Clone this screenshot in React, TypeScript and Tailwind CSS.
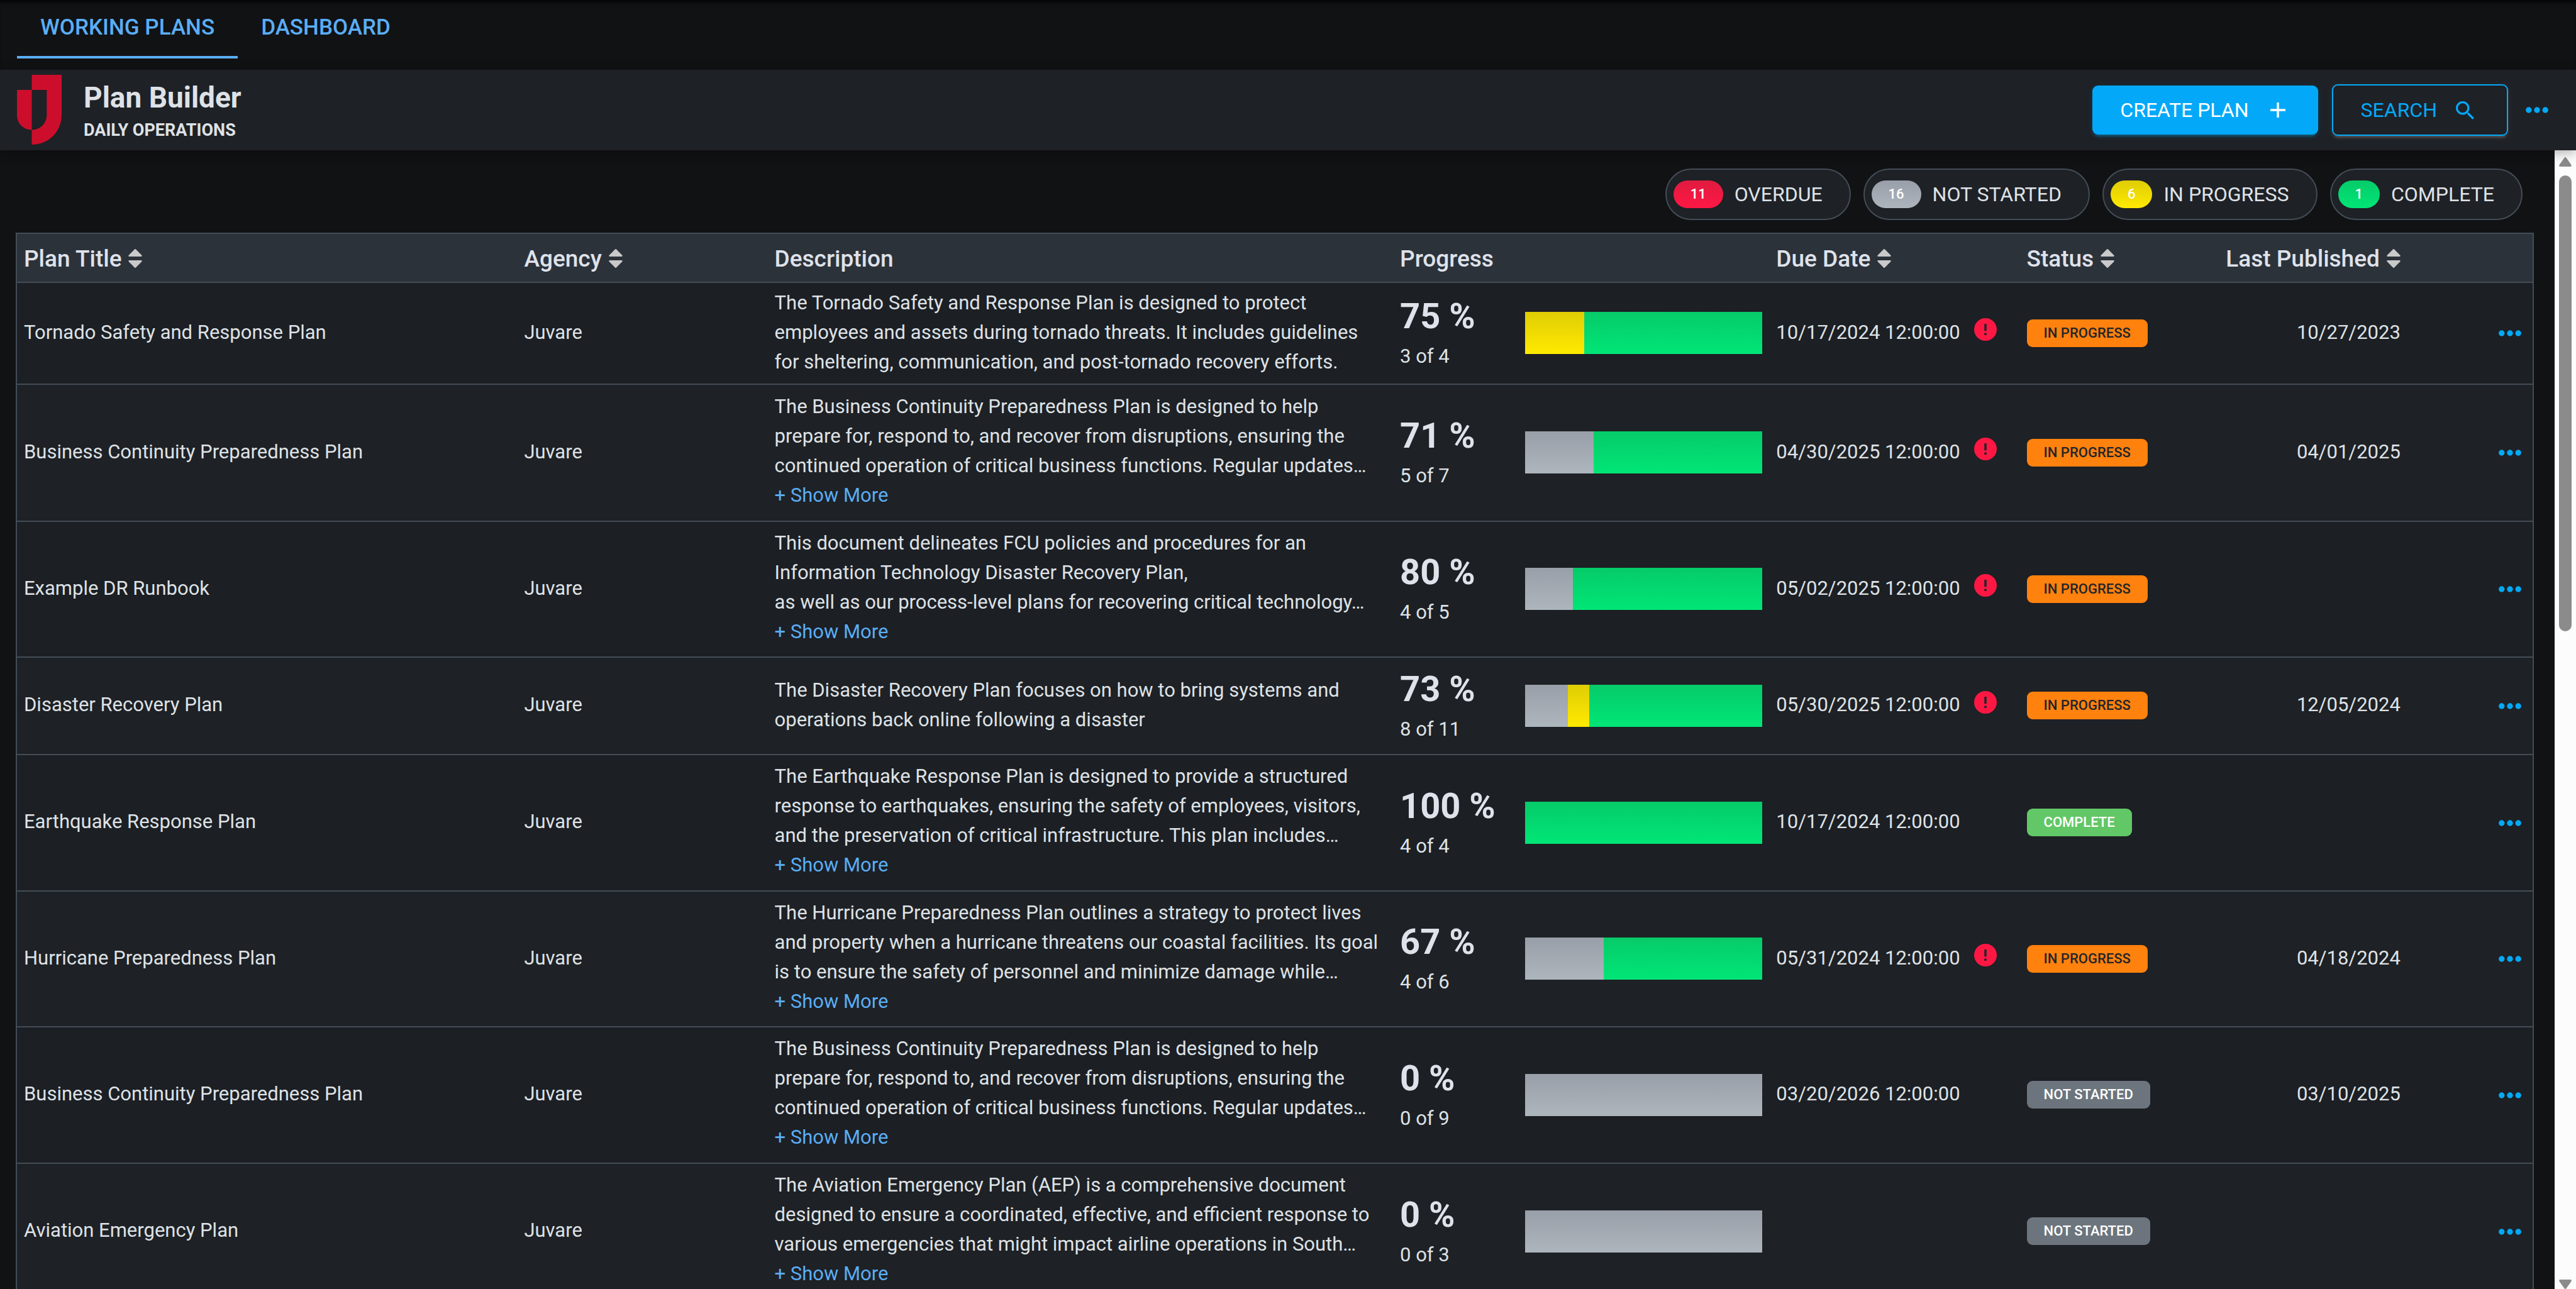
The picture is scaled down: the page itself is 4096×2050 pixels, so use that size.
import React from 'react';
import clsx from 'clsx';

type Status = 'IN PROGRESS' | 'COMPLETE' | 'NOT STARTED';

interface Segment {
  tone: 'gray' | 'yellow' | 'green';
  percent: number;
}

interface Plan {
  title: string;
  description: string;
  truncated?: boolean;
  percent: number;
  done: string;
  segments: Segment[];
  due?: string;
  overdue?: boolean;
  status: Status;
  published?: string;
  height: string;
}

const plans: Plan[] = [
  {
    title: 'Tornado Safety and Response Plan',
    description:
      'The Tornado Safety and Response Plan is designed to protect employees and assets during tornado threats. It includes guidelines for sheltering, communication, and post-tornado recovery efforts.',
    percent: 75,
    done: '3 of 4',
    segments: [{ tone: 'yellow', percent: 25 }, { tone: 'green', percent: 75 }],
    due: '10/17/2024 12:00:00',
    overdue: true,
    status: 'IN PROGRESS',
    published: '10/27/2023',
    height: 'h-[162px]',
  },
  {
    title: 'Business Continuity Preparedness Plan',
    description:
      'The Business Continuity Preparedness Plan is designed to help prepare for, respond to, and recover from disruptions, ensuring the continued operation of critical business functions. Regular updates…',
    truncated: true,
    percent: 71,
    done: '5 of 7',
    segments: [{ tone: 'gray', percent: 29 }, { tone: 'green', percent: 71 }],
    due: '04/30/2025 12:00:00',
    overdue: true,
    status: 'IN PROGRESS',
    published: '04/01/2025',
    height: 'h-[218px]',
  },
  {
    title: 'Example DR Runbook',
    description:
      'This document delineates FCU policies and procedures for an Information Technology Disaster Recovery Plan,\nas well as our process-level plans for recovering critical technology…',
    truncated: true,
    percent: 80,
    done: '4 of 5',
    segments: [{ tone: 'gray', percent: 20 }, { tone: 'green', percent: 80 }],
    due: '05/02/2025 12:00:00',
    overdue: true,
    status: 'IN PROGRESS',
    height: 'h-[216px]',
  },
  {
    title: 'Disaster Recovery Plan',
    description: 'The Disaster Recovery Plan focuses on how to bring systems and operations back online following a disaster',
    percent: 73,
    done: '8 of 11',
    segments: [
      { tone: 'gray', percent: 18 },
      { tone: 'yellow', percent: 9 },
      { tone: 'green', percent: 73 },
    ],
    due: '05/30/2025 12:00:00',
    overdue: true,
    status: 'IN PROGRESS',
    published: '12/05/2024',
    height: 'h-[155px]',
  },
  {
    title: 'Earthquake Response Plan',
    description:
      'The Earthquake Response Plan is designed to provide a structured response to earthquakes, ensuring the safety of employees, visitors, and the preservation of critical infrastructure. This plan includes…',
    truncated: true,
    percent: 100,
    done: '4 of 4',
    segments: [{ tone: 'green', percent: 100 }],
    due: '10/17/2024 12:00:00',
    status: 'COMPLETE',
    height: 'h-[217px]',
  },
  {
    title: 'Hurricane Preparedness Plan',
    description:
      'The Hurricane Preparedness Plan outlines a strategy to protect lives and property when a hurricane threatens our coastal facilities. Its goal is to ensure the safety of personnel and minimize damage while…',
    truncated: true,
    percent: 67,
    done: '4 of 6',
    segments: [{ tone: 'gray', percent: 33 }, { tone: 'green', percent: 67 }],
    due: '05/31/2024 12:00:00',
    overdue: true,
    status: 'IN PROGRESS',
    published: '04/18/2024',
    height: 'h-[216px]',
  },
  {
    title: 'Business Continuity Preparedness Plan',
    description:
      'The Business Continuity Preparedness Plan is designed to help prepare for, respond to, and recover from disruptions, ensuring the continued operation of critical business functions. Regular updates…',
    truncated: true,
    percent: 0,
    done: '0 of 9',
    segments: [{ tone: 'gray', percent: 100 }],
    due: '03/20/2026 12:00:00',
    status: 'NOT STARTED',
    published: '03/10/2025',
    height: 'h-[217px]',
  },
  {
    title: 'Aviation Emergency Plan',
    description:
      'The Aviation Emergency Plan (AEP) is a comprehensive document designed to ensure a coordinated, effective, and efficient response to various emergencies that might impact airline operations in South…',
    truncated: true,
    percent: 0,
    done: '0 of 3',
    segments: [{ tone: 'gray', percent: 100 }],
    status: 'NOT STARTED',
    height: 'h-[217px]',
  },
];

const tones = {
  red: 'bg-gradient-to-b from-[#e01b40] to-[#ff1744]',
  gray: 'bg-gradient-to-b from-[#999fa8] to-[#adb5bd]',
  yellow: 'bg-gradient-to-b from-[#dfcd05] to-[#ffea00]',
  green: 'bg-gradient-to-b from-[#06cb69] to-[#00e676]',
};

const statusStyles: Record<Status, string> = {
  'IN PROGRESS': 'bg-[#ff810e] text-[#212529]',
  COMPLETE: 'bg-[#62c766] text-white',
  'NOT STARTED': 'bg-[#6c757d] text-white',
};

const filters = [
  { count: 11, label: 'OVERDUE', tone: 'red' },
  { count: 16, label: 'NOT STARTED', tone: 'gray' },
  { count: 6, label: 'IN PROGRESS', tone: 'yellow' },
  { count: 1, label: 'COMPLETE', tone: 'green' },
] as const;

const columns = [
  { label: 'Plan Title', sortable: true, width: 'w-[19.9%]' },
  { label: 'Agency', sortable: true, width: 'w-[9.95%]' },
  { label: 'Description', width: 'w-[24.85%]' },
  { label: 'Progress', width: 'w-[14.95%]' },
  { label: 'Due Date', sortable: true, width: 'w-[9.95%]' },
  { label: 'Status', sortable: true, width: 'w-[6%]' },
  { label: 'Last Published', sortable: true, width: 'w-[9.4%]', right: true },
];

const Logo = () => (
  <svg viewBox="0 0 71 112" className="h-[112px] w-[71px]" fill="#cc0e2c" aria-hidden="true">
    <path d="M23.5 0H71V63C71 91 50 111 23.5 111V87.5C37 87.5 47.3 77 47.3 64V24H23.5Z" />
    <path d="M0 24H23.5V87.5C10 87.5 0 77 0 64Z" />
  </svg>
);

const SortIcon = () => (
  <svg viewBox="0 0 22 30" className="h-[30px] w-[22px]" fill="#c9c9c9" aria-hidden="true">
    <path d="M10 .6Q11 -.4 12 .6L21.4 10Q22.4 12 20.4 12H1.6Q-.4 12 .6 10Z" />
    <path d="M10 29.4Q11 30.4 12 29.4L21.4 20Q22.4 18 20.4 18H1.6Q-.4 18 .6 20Z" />
  </svg>
);

const Dots = () => (
  <svg viewBox="0 0 36 10" className="h-[10px] w-[36px]" fill="#03a9f4" aria-hidden="true">
    <circle cx="4.8" cy="5" r="4.7" />
    <circle cx="18" cy="5" r="4.7" />
    <circle cx="31.2" cy="5" r="4.7" />
  </svg>
);

const PlusIcon = () => (
  <svg viewBox="0 0 24 24" className="size-[24px]" fill="none" stroke="currentColor" strokeWidth="3.4" aria-hidden="true">
    <path d="M12 0V24M0 12H24" />
  </svg>
);

const SearchIcon = () => (
  <svg viewBox="3 3 17.49 17.49" className="size-[29px]" fill="currentColor" aria-hidden="true">
    <path d="M15.5 14h-.79l-.28-.27C15.41 12.59 16 11.11 16 9.5 16 5.91 13.09 3 9.5 3S3 5.91 3 9.5 5.91 16 9.5 16c1.61 0 3.09-.59 4.23-1.57l.27.28v.79l5 4.99L20.49 19l-4.99-5zm-6 0C7.01 14 5 11.99 5 9.5S7.01 5 9.5 5 14 7.01 14 9.5 11.99 14 9.5 14z" />
  </svg>
);

const AlertIcon = () => (
  <svg viewBox="0 0 36 36" className="size-[36px]" aria-label="Overdue">
    <circle cx="18" cy="18" r="18" fill="#ff1744" />
    <path d="M16.2 9H19.8V20.2H16.2ZM16.2 23.4H19.8V27H16.2Z" fill="#212529" />
  </svg>
);

const PlanRow: React.FC<{ plan: Plan }> = ({ plan }) => (
  <tr className={clsx('border-b-2 border-[#434d57] odd:bg-[#1c1f24] even:bg-[#1e2125]', plan.height)}>
    <td className="px-[11px] pt-[8px] pb-[12px]">{plan.title}</td>
    <td className="px-[11px] pt-[8px] pb-[12px]">Juvare</td>
    <td className="pt-[8px] pr-[15px] pb-[11px] pl-[11px]">
      <p className="whitespace-pre-line">{plan.description}</p>
      {plan.truncated && (
        <button type="button" className="mb-[4px] block text-[#5aaef5]">
          + Show More
        </button>
      )}
    </td>
    <td className="px-[11px] pt-[8px] pb-[9px]">
      <div className="flex items-center">
        <div className="mb-[6px] w-[199px] shrink-0">
          <div className="text-[56px] leading-[80px] font-bold text-[#dfe2ea]">{plan.percent} %</div>
          <div>{plan.done}</div>
        </div>
        <div className="flex h-[67px] flex-1">
          {plan.segments.map((segment) => (
            <div key={segment.tone} className={tones[segment.tone]} style={{ width: `${segment.percent}%` }} />
          ))}
        </div>
      </div>
    </td>
    <td className="px-[11px] pt-[8px] pb-[12px]">
      <div className="flex items-center gap-[22px]">
        {plan.due}
        {plan.overdue && (
          <span className="mb-[8px]">
            <AlertIcon />
          </span>
        )}
      </div>
    </td>
    <td className="px-[11px] pb-[4px]">
      <span className={clsx('inline-block rounded-[9px] px-[27px] align-middle text-[22px] leading-[44px] font-medium whitespace-nowrap', statusStyles[plan.status])}>
        {plan.status}
      </span>
    </td>
    <td className="px-[11px] pt-[8px] pb-[12px] text-right">{plan.published}</td>
    <td className="px-[18px] pb-[4px] text-right">
      <button type="button" aria-label={`Actions for ${plan.title}`} className="align-middle">
        <Dots />
      </button>
    </td>
  </tr>
);

const Scrollbar = () => (
  <div className="flex w-[34px] shrink-0 flex-col items-center bg-[#fcfcfc] pt-[11px]" aria-hidden="true">
    <svg viewBox="0 0 20 15" className="h-[15px] w-[20px] shrink-0" fill="#8b8b8b">
      <path d="M8.4 1Q10 -1 11.6 1L19.4 12Q20.6 15 18 15H2Q-.6 15 .6 12Z" />
    </svg>
    <div className="mt-[14px] h-[40.3%] w-[20px] rounded-full bg-[#8b8b8b]" />
    <svg viewBox="0 0 20 15" className="mt-auto h-[15px] w-[20px] shrink-0" fill="#8b8b8b">
      <path d="M8.4 14Q10 16 11.6 14L19.4 3Q20.6 0 18 0H2Q-.6 0 .6 3Z" />
    </svg>
  </div>
);

export default function App() {
  return (
    <div className="flex h-screen flex-col overflow-hidden bg-[#111214] font-[Roboto,sans-serif] text-[31px] leading-[47px] text-[#dee2e6]">
      <nav className="flex h-[111px] shrink-0 px-[27px] text-[35px] font-medium text-[#5aaef5] shadow-[inset_0_8px_8px_-6px_#000000]">
        <a href="#working-plans" className="h-[93px] border-b-4 border-[#5aaef5] px-[37px] pt-[20px]">
          WORKING PLANS
        </a>
        <a href="#dashboard" className="h-[93px] px-[37px] pt-[20px]">
          DASHBOARD
        </a>
      </nav>

      <header className="relative flex h-[128px] shrink-0 items-center bg-[#1e2126] pr-[44px] pl-[27px] shadow-[0_4px_18px_rgba(0,0,0,0.3)]">
        <Logo />
        <div className="ml-[35px] pt-[6px]">
          <h1 className="text-[46px] leading-[58px] font-bold">Plan Builder</h1>
          <p className="text-[27px] font-bold">DAILY OPERATIONS</p>
        </div>
        <button
          type="button"
          className="ml-auto flex h-[78px] items-center gap-[34px] rounded-[9px] bg-[#03a9f8] pr-[52px] pl-[44px] text-[32px] text-white shadow-[0_4px_4px_rgba(3,169,244,0.14),0_7px_2px_-4px_rgba(3,169,244,0.2),0_2px_11px_rgba(3,169,244,0.12)]"
        >
          CREATE PLAN
          <PlusIcon />
        </button>
        <button
          type="button"
          className="ml-[22px] flex h-[82px] items-center gap-[30px] rounded-[9px] border-2 border-[#03a9f8] pr-[52px] pl-[44px] text-[32px] text-[#03a9f8] shadow-[0_4px_4px_rgba(153,153,153,0.14),0_7px_2px_-4px_rgba(153,153,153,0.2),0_2px_11px_rgba(153,153,153,0.12)]"
        >
          SEARCH
          <SearchIcon />
        </button>
        <button type="button" aria-label="More options" className="ml-[28px]">
          <Dots />
        </button>
      </header>

      <main className="flex min-h-0 flex-1">
        <div className="min-w-0 flex-1 overflow-hidden pt-[29px] pr-[33px] pl-[25px]">
          <div className="flex justify-end gap-[20px] pr-[18px]">
            {filters.map((filter) => (
              <button
                key={filter.label}
                type="button"
                className="flex h-[82px] items-center rounded-full border-2 border-[#434d57] bg-[#1e2126] pr-[43px] pl-[11px] text-[32px]"
              >
                <span className={clsx('mr-[18px] rounded-full px-[27px] text-[22px] leading-[44px] font-medium text-white', tones[filter.tone])}>
                  {filter.count}
                </span>
                {filter.label}
              </button>
            ))}
          </div>

          <table className="mt-[20px] w-full table-fixed border-collapse border-2 border-[#434d57] text-left">
            <thead>
              <tr className="h-[78px] border-b-2 border-[#434d57] bg-[#2c323a] text-[37px] text-[#dfe2ea]">
                {columns.map((column) => (
                  <th key={column.label} className={clsx('px-[11px] pt-[2px] font-medium whitespace-nowrap', column.width)}>
                    {column.sortable ? (
                      <button type="button" className={clsx('flex items-center gap-[11px]', column.right && 'ml-auto')}>
                        {column.label}
                        <SortIcon />
                      </button>
                    ) : (
                      column.label
                    )}
                  </th>
                ))}
                <th aria-label="Actions" className="w-[5%]" />
              </tr>
            </thead>
            <tbody>
              {plans.map((plan, index) => (
                <PlanRow key={index} plan={plan} />
              ))}
            </tbody>
          </table>
        </div>
        <Scrollbar />
      </main>
    </div>
  );
}
